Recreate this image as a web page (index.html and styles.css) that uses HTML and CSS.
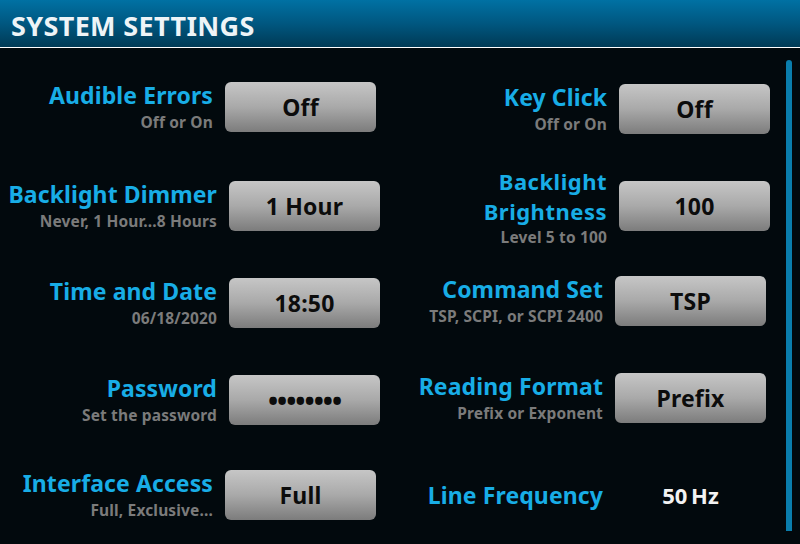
FILE: index.html
```html
<!DOCTYPE html>
<html>
<head>
<meta charset="utf-8">
<title>System Settings</title>
<link rel="stylesheet" href="styles.css">
</head>
<body>
<div class="screen">
  <header class="header">
    <h1 class="title">SYSTEM SETTINGS</h1>
  </header>
  <main class="content">
    <section class="col col--left">
      <div class="row row--shift">
        <div class="label"><div class="name">Audible Errors</div><div class="hint">Off or On</div></div>
        <div class="btn">Off</div>
      </div>
      <div class="row row--down">
        <div class="label"><div class="name">Backlight Dimmer</div><div class="hint">Never, 1 Hour...8 Hours</div></div>
        <div class="btn">1 Hour</div>
      </div>
      <div class="row">
        <div class="label"><div class="name">Time and Date</div><div class="hint">06/18/2020</div></div>
        <div class="btn">18:50</div>
      </div>
      <div class="row">
        <div class="label"><div class="name">Password</div><div class="hint">Set the password</div></div>
        <div class="btn btn--dots">&#8226;&#8226;&#8226;&#8226;&#8226;&#8226;&#8226;&#8226;</div>
      </div>
      <div class="row row--shift row--up">
        <div class="label"><div class="name">Interface Access</div><div class="hint">Full, Exclusive...</div></div>
        <div class="btn">Full</div>
      </div>
    </section>
    <section class="col col--right">
      <div class="row">
        <div class="label"><div class="name">Key Click</div><div class="hint">Off or On</div></div>
        <div class="btn">Off</div>
      </div>
      <div class="row">
        <div class="label"><div class="name name--stack">Backlight<br>Brightness</div><div class="hint hint--tight">Level 5 to 100</div></div>
        <div class="btn">100</div>
      </div>
      <div class="row row--shift row--up">
        <div class="label"><div class="name">Command Set</div><div class="hint">TSP, SCPI, or SCPI 2400</div></div>
        <div class="btn">TSP</div>
      </div>
      <div class="row row--shift">
        <div class="label"><div class="name">Reading Format</div><div class="hint">Prefix or Exponent</div></div>
        <div class="btn">Prefix</div>
      </div>
      <div class="row row--shift">
        <div class="label"><div class="name">Line Frequency</div></div>
        <div class="value">50&#8201;Hz</div>
      </div>
    </section>
    <div class="scrollbar"></div>
  </main>
</div>
</body>
</html>
```
FILE: styles.css
```css
html, body {
  margin: 0;
  padding: 0;
  background: #02090d;
}
.screen {
  width: 800px;
  height: 544px;
  overflow: hidden;
  font-family: "Noto Sans", "Open Sans", "DejaVu Sans", sans-serif;
  font-weight: 700;
  background: #02090d;
}
.header {
  box-sizing: border-box;
  background: linear-gradient(to bottom, #0071a3 0%, #005780 50%, #003a55 100%);
  border-bottom: 1px solid #ffffff;
  height: 48px;
  padding-left: 11px;
  display: flex;
  align-items: center;
}
.title {
  margin: 0;
  font-size: 27px;
  font-weight: 700;
  color: #eef4f7;
  letter-spacing: 0.35px;
  line-height: 30px;
  padding-top: 4px;
}
.content {
  position: relative;
  display: flex;
  height: 496px;
}
.col {
  display: flex;
  flex-direction: column;
  gap: 47px;
}
.col--left {
  width: 400px;
  padding-top: 34px;
}
.col--right {
  width: 400px;
  padding-top: 36px;
}
.row {
  height: 50px;
  display: flex;
  align-items: center;
  gap: 12px;
}
.row--shift {
  margin-left: -4px;
}
.row--down {
  margin-top: 2px;
}
.row--up {
  margin-top: -2px;
}
.col--left .label {
  width: 217px;
}
.col--right .label {
  width: 207px;
}
.label {
  text-align: right;
  flex: none;
}
.name {
  font-size: 23px;
  letter-spacing: 0.1px;
  line-height: 28px;
  color: #18ade6;
}
.name--stack {
  font-size: 22px;
  letter-spacing: 0.5px;
  line-height: 30px;
}
.hint {
  font-size: 15.5px;
  letter-spacing: 0.15px;
  line-height: 22px;
  color: #7b7b7b;
  margin-top: 2px;
}
.hint--tight {
  margin-top: 1px;
  line-height: 20px;
}
.btn {
  width: 151px;
  height: 50px;
  flex: none;
  box-sizing: border-box;
  border-radius: 6px;
  background: linear-gradient(to bottom, #c6c6c6 0%, #a9a9a9 50%, #7c7c7c 100%);
  color: #0c0c0c;
  font-size: 23px;
  letter-spacing: 0.2px;
  display: flex;
  align-items: center;
  justify-content: center;
}
.btn--dots {
  font-size: 27px;
  letter-spacing: -1px;
}
.value {
  width: 151px;
  text-align: center;
  font-size: 22px;
  color: #f2f2f2;
}
.scrollbar {
  position: absolute;
  left: 786px;
  top: 12px;
  width: 6px;
  height: 471px;
  border-radius: 3px 3px 0 0;
  background: #0a7dac;
}
```
